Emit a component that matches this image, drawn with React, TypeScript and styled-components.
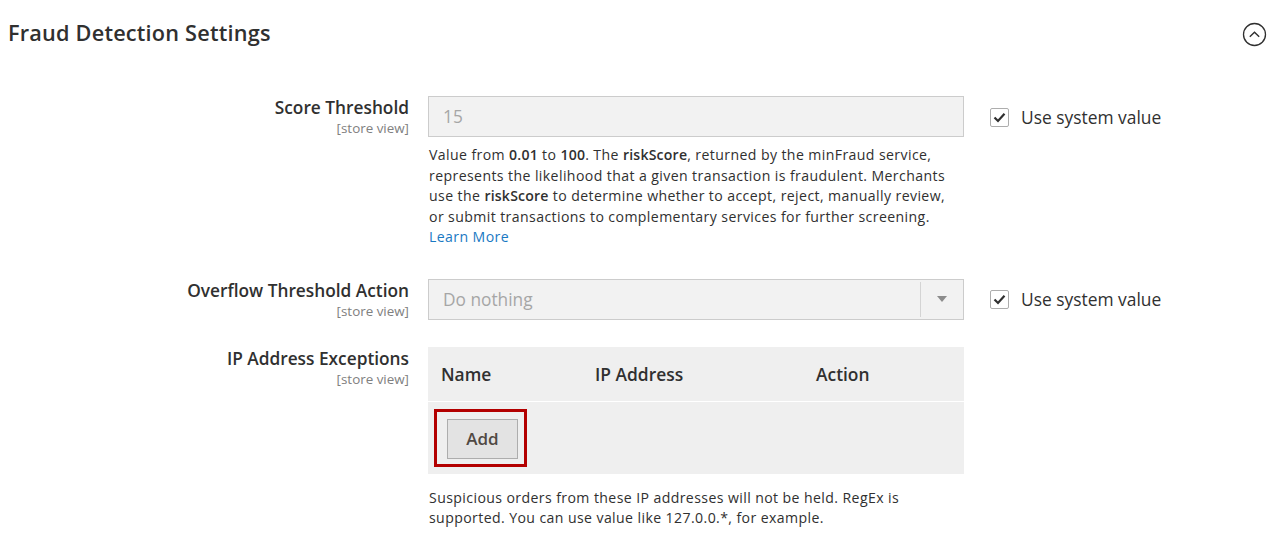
import React from "react";
import styled, { createGlobalStyle } from "styled-components";

const Global = createGlobalStyle`
  html, body { margin: 0; padding: 0; background: #ffffff; }
  body { font-family: "Open Sans", "Liberation Sans", sans-serif; color: #303030; }
  * { box-sizing: border-box; }
`;

const Page = styled.div`
  width: 1275px;
  height: 552px;
  overflow: hidden;
`;

const Header = styled.div`
  display: flex;
  align-items: center;
  justify-content: space-between;
  height: 64px;
  padding: 0 8px 0 8px;
`;

const Title = styled.h2`
  margin: 0;
  font-size: 21.7px;
  font-weight: 600;
  color: #303030;
  letter-spacing: 0.2px;
`;

const CollapseButton = styled.span`
  display: flex;
  width: 26px;
  height: 26px;
  margin-top: 4px;
  align-items: center;
  justify-content: center;
`;

const Form = styled.div`
  display: flex;
  flex-direction: column;
  gap: 27px;
  padding-top: 32px;
`;

const Row = styled.div`
  display: grid;
  grid-template-columns: 428px 536px 1fr;
  align-items: start;
`;

const LabelCell = styled.div`
  padding-right: 19px;
  text-align: right;
  padding-top: 1px;
`;

const LabelText = styled.div`
  font-size: 17.3px;
  font-weight: 600;
  line-height: 22px;
  color: #303030;
`;

const Scope = styled.div`
  font-size: 13.4px;
  line-height: 16px;
  margin-top: 1px;
  color: #808080;
`;

const Control = styled.div`
  display: flex;
  flex-direction: column;
`;

const TextInput = styled.div`
  height: 41px;
  border: 1px solid #cccccc;
  background: #f2f2f2;
  padding: 0 14px;
  display: flex;
  align-items: center;
  font-size: 17.3px;
  color: #a6a6a6;
`;

const Select = styled.div`
  height: 41px;
  border: 1px solid #cccccc;
  background: #f2f2f2;
  display: flex;
  align-items: stretch;
  font-size: 17.3px;
  color: #a6a6a6;
`;

const SelectValue = styled.div`
  flex: 1;
  display: flex;
  align-items: center;
  padding: 0 14px;
`;

const SelectArrow = styled.div`
  width: 43px;
  border-left: 1px solid #d4d4d4;
  margin: 2px 0;
  display: flex;
  align-items: center;
  justify-content: center;
  &::after {
    content: "";
    display: block;
    width: 0;
    height: 0;
    border-left: 5px solid transparent;
    border-right: 5px solid transparent;
    border-top: 6px solid #8c8c8c;
  }
`;

const Note = styled.div<{ $top: number; $bottom?: number }>`
  margin-top: ${(p) => p.$top}px;
  margin-bottom: ${(p) => p.$bottom ?? 0}px;
  font-size: 14.1px;
  line-height: 20.5px;
  letter-spacing: 0.4px;
  color: #303030;
  padding-left: 1px;
  b { font-weight: 600; letter-spacing: 0.2px; }
  a { color: #1979c3; text-decoration: none; }
`;

const SystemCell = styled.label`
  display: flex;
  align-items: center;
  height: 41px;
  padding-left: 26px;
  gap: 12px;
  font-size: 17.4px;
  color: #303030;
`;

const Check = styled.span`
  width: 19px;
  height: 19px;
  border: 1px solid #adadad;
  border-radius: 2px;
  background: #ffffff;
  display: flex;
  align-items: center;
  justify-content: center;
  margin-top: 1px;
`;

const Table = styled.div`
  background: #efefef;
  display: flex;
  flex-direction: column;
`;

const TableHead = styled.div`
  display: grid;
  grid-template-columns: 154px 221px 1fr;
  height: 55px;
  align-items: center;
  padding-left: 13px;
  font-size: 17.4px;
  font-weight: 600;
  color: #303030;
  border-bottom: 1px solid #ffffff;
`;

const TableBody = styled.div`
  height: 72px;
  padding: 7px 0 0 6px;
`;

const Highlight = styled.div`
  display: inline-block;
  border: 3px solid #b30000;
  padding: 7px 6px 5px 10px;
`;

const AddButton = styled.button`
  width: 71px;
  height: 40px;
  background: #e3e3e3;
  border: 1px solid #adadad;
  font-family: "Open Sans", "Liberation Sans", sans-serif;
  font-size: 17px;
  font-weight: 600;
  color: #514943;
  padding: 0;
  display: block;
`;

const Field = ({
  label,
  children,
  system,
}: {
  label: string;
  children: React.ReactNode;
  system?: boolean;
}) => (
  <Row>
    <LabelCell>
      <LabelText>{label}</LabelText>
      <Scope>[store view]</Scope>
    </LabelCell>
    <Control>{children}</Control>
    {system ? (
      <SystemCell>
        <Check>
          <svg width="13" height="11" viewBox="0 0 13 11">
            <path d="M1.5 5.5 L5 9 L11.5 1.8" fill="none" stroke="#303030" strokeWidth="2.2" />
          </svg>
        </Check>
        Use system value
      </SystemCell>
    ) : (
      <div />
    )}
  </Row>
);

export default function App() {
  return (
    <Page>
      <Global />
      <Header>
        <Title>Fraud Detection Settings</Title>
        <CollapseButton>
          <svg width="25" height="25" viewBox="0 0 25 25">
            <circle cx="12.5" cy="12.5" r="11" fill="none" stroke="#303030" strokeWidth="1.3" />
            <path d="M7.8 14.8 L12.5 10.2 L17.2 14.8" fill="none" stroke="#303030" strokeWidth="1.4" />
          </svg>
        </CollapseButton>
      </Header>
      <Form>
        <Field label="Score Threshold" system>
          <TextInput>15</TextInput>
          <Note $top={8} $bottom={4}>
            Value from <b>0.01</b> to <b>100</b>. The <b>riskScore</b>, returned by the minFraud service,
            represents the likelihood that a given transaction is fraudulent. Merchants use the{" "}
            <b>riskScore</b> to determine whether to accept, reject, manually review, or submit
            transactions to complementary services for further screening.
            <br />
            <a href="#">Learn More</a>
          </Note>
        </Field>
        <Field label="Overflow Threshold Action" system>
          <Select>
            <SelectValue>Do nothing</SelectValue>
            <SelectArrow />
          </Select>
        </Field>
        <Field label="IP Address Exceptions">
          <Table>
            <TableHead>
              <span>Name</span>
              <span>IP Address</span>
              <span>Action</span>
            </TableHead>
            <TableBody>
              <Highlight>
                <AddButton>Add</AddButton>
              </Highlight>
            </TableBody>
          </Table>
          <Note $top={14}>
            Suspicious orders from these IP addresses will not be held. RegEx is supported. You can
            use value like 127.0.0.*, for example.
          </Note>
        </Field>
      </Form>
    </Page>
  );
}
